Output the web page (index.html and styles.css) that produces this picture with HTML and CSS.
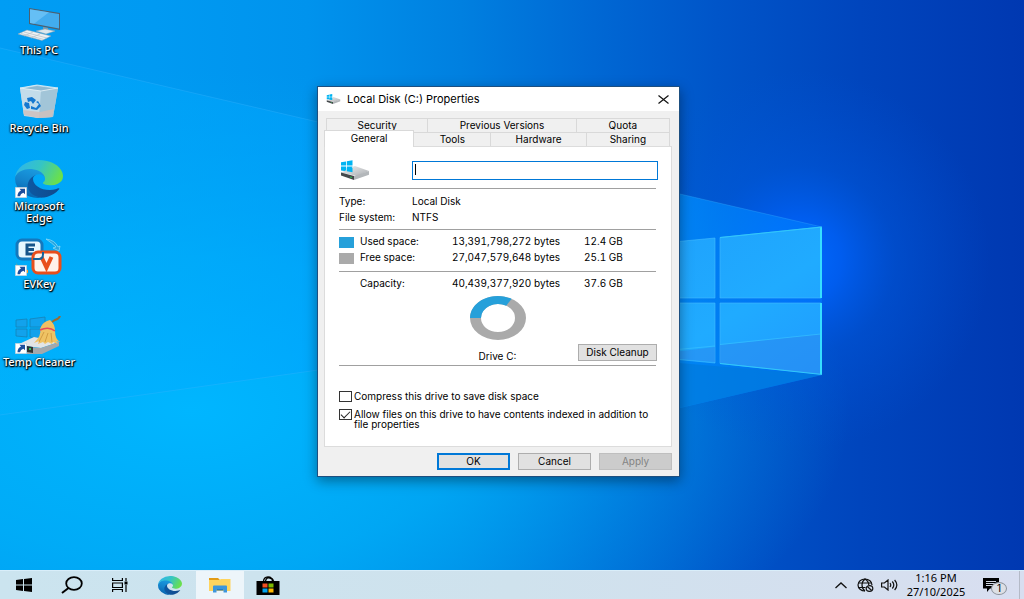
FILE: index.html
```html
<!DOCTYPE html>
<html lang="en">
<head>
<meta charset="utf-8">
<title>Local Disk (C:) Properties</title>
<link rel="stylesheet" href="styles.css">
</head>
<body>
<svg class="defs" aria-hidden="true">
  <defs>
    <linearGradient id="edge-dark" x1="0" x2="1" y1="0" y2="0"><stop offset="0" stop-color="#0c59a4"/><stop offset="1" stop-color="#114a8b"/></linearGradient>
    <linearGradient id="edge-mid" x1="0.6" x2="0.3" y1="0" y2="1"><stop offset="0" stop-color="#1b9de2"/><stop offset="0.5" stop-color="#1383cb"/><stop offset="1" stop-color="#0560ab"/></linearGradient>
    <linearGradient id="edge-top" x1="0" x2="1" y1="0.2" y2="0.5"><stop offset="0" stop-color="#2fb4ec"/><stop offset="0.5" stop-color="#35c5c4"/><stop offset="1" stop-color="#6be04a"/></linearGradient>
    <linearGradient id="disk-top" x1="0" x2="1" y1="0" y2="1"><stop offset="0" stop-color="#f1f1f1"/><stop offset="1" stop-color="#a9adb1"/></linearGradient>
  </defs>
  <symbol id="edge" viewBox="0 0 256 256" preserveAspectRatio="none">
    <path fill="url(#edge-dark)" d="M231 190.500a93.700 93.700 0 0 1-10.500 4.700 101.900 101.900 0 0 1-35.900 6.500c-47.300 0-88.500-32.600-88.500-74.300A31.500 31.500 0 0 1 112.500 100c-42.800 1.800-53.800 46.400-53.800 72.500 0 73.900 68.100 81.400 82.800 81.400 7.900 0 19.800-2.300 27-4.600l1.300-.4a128.300 128.300 0 0 0 66.500-52.800 4 4 0 0 0-5.300-5.600z"/>
    <path fill="url(#edge-mid)" d="M105.700 241.400a79.200 79.200 0 0 1-22.700-21.300 80.700 80.700 0 0 1 29.500-120c3.100-1.500 8.500-4.200 15.600-4a32.400 32.400 0 0 1 25.700 13 31.900 31.900 0 0 1 6.400 18.600c0-.2 24.500-79.600-80-79.600-43.900 0-80 41.700-80 78.200a130 130 0 0 0 12.100 56 128 128 0 0 0 156.400 67.100 75.500 75.500 0 0 1-63-8z"/>
    <path fill="url(#edge-top)" d="M152.300 148.900c-.8 1-3.300 2.500-3.300 5.600 0 2.600 1.700 5.100 4.700 7.200 14.400 10 41.500 8.700 41.600 8.700a59.600 59.600 0 0 0 30.300-8.300 61.400 61.400 0 0 0 30.400-52.900c.3-22.400-8-37.300-11.300-43.900C223.500 23.800 177.700 0 128 0A128 128 0 0 0 0 126.200c.5-36.500 36.800-66 80-66 3.500 0 23.500.3 42 10 16.300 8.600 24.900 19 30.900 29.200 6.200 10.700 7.300 24.200 7.300 29.500s-2.800 13.400-7.900 20z"/>
  </symbol>
  <symbol id="shortcut" viewBox="0 0 12 11">
    <path fill="#fff" stroke="#b9c3cc" stroke-width=".6" d="M.3.300h11.400v10.400H.3z"/>
    <path fill="#1d4f9c" d="M4.500 1.800H10v5.400L8.400 5.700Q5.500 6.500 5 9.300H2.500Q2.400 5.200 6 3.500z"/>
  </symbol>
  <symbol id="disk" viewBox="0 0 28 20">
    <path fill="#00b4f2" d="M0 2.300 5 1.400v4.200H0zM5.800 1.200 11.500.2v5.400H5.800zM0 6.400h5v4.800L0 10.500zM5.800 6.400h5.700v5.800l-5.700-.9z"/>
    <path fill="url(#disk-top)" d="M0 12.500 11.500 7.500V6.700L14 6l14 5-12 5z"/>
    <path fill="#45494c" d="M0 12.500 13 16v4L0 15.500z"/>
    <path fill="#b3b7ba" d="M13 16 28 11v3.700L13 20z"/>
    <path fill="#00b4f2" d="M5.800 8h5.700v4.200l-5.700-.9z"/>
    <path fill="#28c24d" d="m9 16.500 2 .6v1l-2-.6z"/>
  </symbol>
</svg>

<main class="desktop">
  <svg class="wallpaper" viewBox="0 0 1024 570" preserveAspectRatio="none" aria-hidden="true">
    <defs>
      <linearGradient id="sky" x1="0" x2="1024" y1="0" y2="0" gradientUnits="userSpaceOnUse">
        <stop offset="0" stop-color="#009df4"/><stop offset=".15" stop-color="#009af2"/><stop offset=".3" stop-color="#0093ed"/><stop offset=".45" stop-color="#0080e0"/><stop offset=".58" stop-color="#0068d4"/><stop offset=".7" stop-color="#0055c9"/><stop offset=".84" stop-color="#0045bd"/><stop offset="1" stop-color="#0038b1"/>
      </linearGradient>
      <radialGradient id="lowglow" cx="0" cy="0" r="1" gradientUnits="userSpaceOnUse" gradientTransform="translate(190 410) scale(660 340)"><stop offset="0" stop-color="#00b6ff"/><stop offset=".45" stop-color="#00b0f8" stop-opacity=".75"/><stop offset="1" stop-color="#00a4f0" stop-opacity="0"/></radialGradient>
      <radialGradient id="halo" cx="0" cy="0" r="1" gradientUnits="userSpaceOnUse" gradientTransform="translate(800 260) scale(190 190)"><stop offset="0" stop-color="#006aff"/><stop offset=".22" stop-color="#0062fa" stop-opacity=".8"/><stop offset=".5" stop-color="#005ae2" stop-opacity=".4"/><stop offset="1" stop-color="#0054d8" stop-opacity="0"/></radialGradient>
      <linearGradient id="beam" x1="0" x2="822" y1="0" y2="0" gradientUnits="userSpaceOnUse"><stop offset="0" stop-color="#00b4ff" stop-opacity=".3"/><stop offset=".8" stop-color="#0092ff" stop-opacity=".75"/><stop offset="1" stop-color="#007cff" stop-opacity=".6"/></linearGradient>
      <linearGradient id="pane" x1="0" x2="1" y1="0" y2="1"><stop offset="0" stop-color="#1f9ffb"/><stop offset=".6" stop-color="#20abff"/><stop offset="1" stop-color="#1f9bff"/></linearGradient>
    </defs>
    <path fill="url(#sky)" d="M0 0h1024v570H0z"/>
    <path fill="url(#lowglow)" d="M0 0h1024v570H0z"/>
    <path fill="url(#halo)" d="M0 0h1024v570H0z"/>
    <path fill="url(#beam)" d="M0 48 318 122 680 194 822 227v148L680 408 318 370 0 415z"/>
    <path fill="#007bdd" opacity=".7" d="M679 363 822 375 679 408z"/>
    <path fill="none" stroke="#40b5ff" stroke-opacity=".3" d="M0 48 318 122 680 194 822 227M0 415 318 370"/>
    <path fill="url(#pane)" stroke="#43bdff" stroke-opacity=".6" d="M600 249 715 238v60H600zM720 237.500 821 227v71H720zM600 303h115v60l-115-11zM720 303h101v71L720 363.500z"/>
    <path fill="#2b86ed" opacity=".5" d="M600 361 715 347v15l-115-10zM720 345 821 334v40L720 363z"/>
    <path fill="none" stroke="#37c0ff" stroke-opacity=".7" d="M640 353 715 346M720 344.500 821 334"/>
    <path fill="none" stroke="#35deff" stroke-width="2" d="M821 227v71M821 303v71"/>
    <path fill="none" stroke="#31c8fa" d="M720 237.500 822 227M720 363.500 822 374.500"/>
  </svg>

  <nav class="shortcuts" aria-label="Desktop">
    <a class="shortcut" href="#this-pc">
      <svg class="shortcut-icon" viewBox="0 0 48 38" aria-hidden="true">
        <path fill="#4c6070" d="m14 4 31 5v17l-31-6z"/><path fill="#42acee" d="m15 5.200 29 4.700v14.700l-29-5.500z"/><path fill="#7dccfa" opacity=".6" d="m15 5.200 19 3-15 11.600-4-.7z"/>
        <path fill="#879daa" d="m28 23 5 1v3h-5z"/><path fill="#dfe8ed" stroke="#8ba0ae" stroke-width=".5" d="m21 27 9-2 10 2-9 3z"/>
        <path fill="#eef1f3" stroke="#8ba0ae" stroke-width=".5" d="m3 30 9-4 24 6-9 4.500z"/><path stroke="#b5c0c7" stroke-width=".7" fill="none" d="m6 29.500 23 6M9 28l23 6M9 32l9-4M16 34l9-4"/>
      </svg>
      <span class="shortcut-label">This PC</span>
    </a>
    <a class="shortcut" href="#recycle-bin">
      <svg class="shortcut-icon" viewBox="0 0 48 38" aria-hidden="true">
        <path fill="#b8d7e8" d="m5 6 16-3 22 3-5 29-15 1-14-2z"/><path fill="#8db9d2" d="m8 6.500 14-2.500 18 2.500L26 9z"/><path fill="#c3dcea" d="m5 6 21 3-2 27-15-3z"/><path fill="#a2c5d8" d="m26 9 17-3-5 29-14 1z"/><path fill="#cfc0bd" d="m8 28 17 2 14-3-2 8-14 1-14-3z" opacity=".85"/>
        <path fill="none" stroke="#e8f3f8" stroke-width=".8" d="m5 6 21 3 17-3-21-3z"/>
        <path fill="#1478d0" d="m12 16 5-1 4 3-3 4-2-3-3 1zM10 20l4 1 1 5-3 1-3-4zM16 24l5 2 3-4-3-2 2-1 3 5-4 4-6-1z"/>
      </svg>
      <span class="shortcut-label">Recycle Bin</span>
    </a>
    <a class="shortcut" href="#edge-browser">
      <svg class="shortcut-icon" viewBox="0 0 48 38" aria-hidden="true"><use href="#edge" width="48" height="38"/><use href="#shortcut" y="27" width="12" height="11"/></svg>
      <span class="shortcut-label">Microsoft Edge</span>
    </a>
    <a class="shortcut" href="#evkey">
      <svg class="shortcut-icon" viewBox="0 0 48 38" aria-hidden="true">
        <path fill="#2ba7de" stroke="#a8e5fa" stroke-width=".6" d="M31 1q9 1 12 8l2-1-1 5-6-3 3-1Q37 5 31 1z"/><path fill="#ff9c24" d="M1 24q1 5 7 7l5 1v3Q2 34 1 24z"/>
        <rect x="2" y="2" width="25" height="19" rx="5" fill="#e6f7ff" stroke="#1478bd" stroke-width="3"/>
        <path fill="none" stroke="#165489" stroke-width="3" d="M20 7h-8v9h8M12 11.500h7"/>
        <rect x="18" y="14" width="27" height="21" rx="5" fill="#fff2e9" stroke="#e84e1b" stroke-width="3"/>
        <path fill="none" stroke="#e84e1b" stroke-width="4" d="m26.500 19 5 10.500 5-10.500"/><path fill="none" stroke="#14639b" stroke-width="2" d="M18 21h6q4 0 4-5v-2"/>
        <use href="#shortcut" y="27" width="12" height="11"/>
      </svg>
      <span class="shortcut-label">EVKey</span>
    </a>
    <a class="shortcut" href="#temp-cleaner">
      <svg class="shortcut-icon" viewBox="0 0 48 38" aria-hidden="true">
        <path fill="#12a2ec" stroke="#1583b8" stroke-width=".8" d="m1 4 11-1v8H1zM15 3l15-2v10H15zM1 13h11v8L1 20zM15 13h15v10l-15-2z"/>
        <path fill="#e1e4e6" d="m2 29 17-8 25 5-18 6z"/><path fill="#a3a8ac" d="m26 32 18-6v4l-17 8H12v-7z"/><path fill="#303536" d="m12 30 6 1v6l-6-1z"/><path fill="#35c45a" d="M14 32h2v2h-2z"/>
        <path fill="#efc364" d="M25 13q9-4 15 2 0 8 5 11l-4-1 2 3-5-2-1 2-4-2-3 2-2-2-5 2 1-3-5 2q8-8 6-14z"/><path fill="none" stroke="#bd812b" stroke-width=".6" d="m29 16-5 10M33 17l-3 9M36 17l1 9"/>
        <path fill="#f1c063" d="M25 13q2-6 7-8l3-1q5 4 5 11-7-4-15-2z"/><path fill="none" stroke="#e64a5a" stroke-width="1.500" d="M25 14q9-4 15 1"/><path fill="none" stroke="#9a6b31" stroke-width="2" d="m37 6 3-2q4-1 5-4"/>
        <use href="#shortcut" y="27" width="12" height="11"/>
      </svg>
      <span class="shortcut-label">Temp Cleaner</span>
    </a>
  </nav>

  <section class="dialog" role="dialog" aria-labelledby="dialog-title">
    <header class="titlebar">
      <svg class="titlebar-icon" viewBox="0 0 28 20" aria-hidden="true"><use href="#disk"/></svg>
      <h1 class="title" id="dialog-title">Local Disk (C:) Properties</h1>
      <button class="close" type="button" aria-label="Close"><svg class="close-icon" viewBox="0 0 11 9" aria-hidden="true"><path fill="none" stroke="#111" stroke-width="1.200" d="m.5.500 10 8m0-8-10 8"/></svg></button>
    </header>
    <form class="dialog-body">
      <div class="tabs" role="tablist">
        <div class="tab-row tab-row-back">
          <button class="tab" type="button" role="tab">Security</button>
          <button class="tab" type="button" role="tab">Previous Versions</button>
          <button class="tab" type="button" role="tab">Quota</button>
        </div>
        <div class="tab-row tab-row-front">
          <button class="tab tab-active" type="button" role="tab" aria-selected="true">General</button>
          <button class="tab" type="button" role="tab">Tools</button>
          <button class="tab" type="button" role="tab">Hardware</button>
          <button class="tab" type="button" role="tab">Sharing</button>
        </div>
      </div>
      <div class="panel" role="tabpanel">
        <div class="volume">
          <svg class="volume-icon" viewBox="0 0 28 20" aria-hidden="true"><use href="#disk"/></svg>
          <div class="volume-field">
            <input class="volume-name" type="text" aria-label="Volume label">
            <span class="caret"></span>
          </div>
        </div>
        <dl class="facts">
          <dt>Type:</dt><dd>Local Disk</dd>
          <dt>File system:</dt><dd>NTFS</dd>
        </dl>
        <table class="space">
          <tbody>
            <tr><th scope="row"><span class="swatch swatch-used"></span>Used space:</th><td class="bytes">13,391,798,272 bytes</td><td class="size">12.4 GB</td></tr>
            <tr><th scope="row"><span class="swatch swatch-free"></span>Free space:</th><td class="bytes">27,047,579,648 bytes</td><td class="size">25.1 GB</td></tr>
          </tbody>
        </table>
        <table class="space space-total">
          <tbody><tr><th scope="row"><span class="swatch"></span>Capacity:</th><td class="bytes">40,439,377,920 bytes</td><td class="size">37.6 GB</td></tr></tbody>
        </table>
        <div class="drive">
          <figure class="chart">
            <svg class="donut" viewBox="0 0 56 44" role="img" aria-label="Used and free space">
              <path fill="#aaa" fill-rule="evenodd" d="M0 22a28 22 0 1 0 56 0 28 22 0 1 0-56 0zm11 0a17 14 0 1 0 34 0 17 14 0 1 0-34 0z"/>
              <path fill="#26a0da" d="M0 22A28 22 0 0 1 41.600 2.800L36.200 9.800A17 14 0 0 0 11 22z"/>
            </svg>
            <figcaption>Drive C:</figcaption>
          </figure>
          <button class="button cleanup" type="button">Disk Cleanup</button>
        </div>
        <div class="options">
          <label class="option"><input class="check" type="checkbox"><span>Compress this drive to save disk space</span></label>
          <label class="option"><input class="check" type="checkbox" checked><span>Allow files on this drive to have contents indexed in addition to file properties</span></label>
        </div>
      </div>
      <div class="actions">
        <button class="button button-default" type="submit">OK</button>
        <button class="button" type="button">Cancel</button>
        <button class="button" type="button" disabled>Apply</button>
      </div>
    </form>
  </section>
</main>

<footer class="taskbar">
  <button class="task" type="button" aria-label="Start"><svg width="16" height="14" viewBox="0 0 16 14" aria-hidden="true"><path d="m0 2 7-1v5.500H0zM8 .9 16 0v6.500H8zM0 7.500h7V13l-7-1zM8 7.500h8V14l-8-.9z"/></svg></button>
  <button class="task" type="button" aria-label="Search"><svg width="22" height="18" viewBox="0 0 22 18" aria-hidden="true"><ellipse cx="13" cy="7.500" rx="7.800" ry="6.300" fill="none" stroke="#000" stroke-width="1.800"/><path stroke="#000" stroke-width="2" d="m7.500 12-6.500 5"/></svg></button>
  <button class="task" type="button" aria-label="Task View"><svg width="16" height="14" viewBox="0 0 16 14" aria-hidden="true"><path fill="none" stroke="#000" stroke-width="1.200" d="M.6 0v2.500h9.800V0M.6 5h9.800v4.500H.6zM.6 14v-2.500h9.800V14M14 0v3M14 7v7"/><path d="M12.500 3.500h3v3h-3z"/></svg></button>
  <button class="task task-edge" type="button" aria-label="Microsoft Edge"><svg width="24" height="19" viewBox="0 0 24 19" aria-hidden="true"><use href="#edge" width="24" height="19"/></svg></button>
  <button class="task task-open" type="button" aria-label="File Explorer"><svg width="22" height="16" viewBox="0 0 22 16" aria-hidden="true"><path fill="#e39b16" d="M0 1h9l2 2h10v3H0z"/><path fill="#ffd45e" d="M0 3h10l2-1h9.500v12H0z"/><path fill="#3d96dc" d="M4 15.500V9.500q0-1 1-1h12q1 0 1 1v6h-3.500V12h-7v3.500z"/><path fill="#247cc4" d="M7.500 12h7v1.500h-7z"/></svg></button>
  <button class="task" type="button" aria-label="Microsoft Store"><svg width="24" height="19" viewBox="0 0 24 19" aria-hidden="true"><path d="M.5 5h23v14H.5z"/><path fill="none" stroke="#000" stroke-width="1.300" d="M7.500 6Q7.500.800 12 .800t4.500 5.200M9.500 5q1-4 4-3 3 0 4 3"/><path fill="#f25022" d="M6.500 7.500h5v4h-5z"/><path fill="#7fba00" d="M12.500 7.500h5v4h-5z"/><path fill="#00a4ef" d="M6.500 12.500h5v4h-5z"/><path fill="#ffb900" d="M12.500 12.500h5v4h-5z"/></svg></button>
  <div class="tray">
    <button class="tray-item" type="button" aria-label="Show hidden icons"><svg width="12" height="7" viewBox="0 0 12 7" aria-hidden="true"><path fill="none" stroke="#111" stroke-width="1.300" d="m.5 6 5.500-5 5.500 5"/></svg></button>
    <button class="tray-item" type="button" aria-label="Network"><svg width="17" height="14" viewBox="0 0 17 14" aria-hidden="true"><g fill="none" stroke="#111" stroke-width="1.200"><path d="M8 13A7 6 0 1 1 15 7"/><path d="M8 13C4 10 4 4 8 1c3 2 4 4 3.700 6M1.500 5h13M1.500 9.500h7"/><ellipse cx="12.500" cy="10.500" rx="3.300" ry="2.800"/><path d="m10.300 8.500 4.400 4"/></g></svg></button>
    <button class="tray-item" type="button" aria-label="Volume"><svg width="17" height="12" viewBox="0 0 17 12" aria-hidden="true"><path fill="none" stroke="#111" stroke-width="1.200" d="M.6 4h2.800L7 1v10L3.400 8H.6zM9 4q1.500 2 0 4M11.300 2.500q3 3.500 0 7M13.600 1q4.500 5 0 10"/></svg></button>
    <time class="clock" datetime="2025-10-27T13:16"><span>1:16 PM</span><span>27/10/2025</span></time>
    <button class="notifications" type="button" aria-label="1 notification"><svg width="16" height="14" viewBox="0 0 16 14" aria-hidden="true"><path d="M0 0h16v10.500H7L4 14v-3.500H0z"/><path stroke="#cdd4df" d="M3 3.500h10M3 5.500h10M3 7.500h7"/></svg><span class="badge">1</span></button>
    <button class="show-desktop" type="button" aria-label="Show desktop"></button>
  </div>
</footer>
</body>
</html>
```
FILE: styles.css
```css
* { box-sizing: border-box; }

body {
  margin: 0;
  min-height: 100vh;
  display: flex;
  flex-direction: column;
  overflow: hidden;
  font: 10px/16px Inter, "Liberation Sans", sans-serif;
  color: #000;
}

button, input { font: inherit; color: inherit; margin: 0; padding: 0; }
button { border: 0; background: none; }
svg { display: block; }
.defs { position: absolute; width: 0; height: 0; }

/* Desktop */
.desktop { position: relative; flex: 1; background: #0079df; }
.wallpaper { position: absolute; inset: 0; width: 100%; height: 100%; }

.shortcuts {
  position: relative;
  display: grid;
  grid-auto-rows: 78px;
  width: 78px;
  padding-top: 4px;
}
.shortcut {
  display: flex;
  flex-direction: column;
  align-items: center;
  gap: 2px;
  color: #fff;
  text-decoration: none;
}
.shortcut-icon { width: 48px; height: 38px; flex: none; }
.shortcut-label {
  font: 500 11px/12px "Noto Sans", "Open Sans", sans-serif;
  text-align: center;
  text-shadow: 1px 1px 1px #000, 0 1px 2px #000, 0 0 2px #000;
}

/* Properties window */
.dialog {
  position: absolute;
  left: 317px;
  top: 86px;
  width: 363px;
  border: 1px solid #1d4f80;
  background: #f0f0f0;
  box-shadow: 0 4px 12px #0006;
}
.titlebar {
  display: flex;
  align-items: center;
  height: 24px;
  padding: 0 10px 0 8px;
  background: #fff;
}
.titlebar-icon { width: 15px; height: 10px; }
.title {
  flex: 1;
  margin: 0 0 0 6px;
  font: inherit;
  font-size: 11px;
}
.close { display: grid; place-items: center; }
.close-icon { width: 11px; height: 9px; }

.dialog-body { padding: 7px 7px 6px 6px; }
.tabs { padding: 0 2px; }
.tab-row { display: grid; }
.tab-row-back { grid-template-columns: 102fr 148fr 93fr; }
.tab-row-front { grid-template-columns: 88fr 77fr 95fr 83fr; }
.tab {
  height: 14px;
  border: 1px solid #d9d9d9;
  border-width: 1px 1px 0 0;
  line-height: 13px;
}
.tab:first-child { border-left-width: 1px; }
.tab-active {
  position: relative;
  height: 17px;
  margin: -2px 0 -1px -2px;
  padding-bottom: 2px;
  background: #fff;
}

.panel {
  padding: 13px 15px 17px 14px;
  border: 1px solid #dcdcdc;
  background: #fff;
}
.volume {
  display: grid;
  grid-template-columns: 73px 1fr;
  align-items: center;
  padding-bottom: 8px;
}
.volume-icon { width: 28px; height: 20px; margin-left: 2px; }
.volume-field { position: relative; margin-right: -2px; }
.volume-name {
  display: block;
  width: 100%;
  height: 19px;
  padding: 0 3px;
  border: 1px solid #0078d7;
  border-radius: 0;
  background: #fff;
  outline: 0;
}
.caret { position: absolute; left: 3px; top: 3px; width: 1px; height: 11px; background: #000; }

.facts {
  display: grid;
  grid-template-columns: 73px 1fr;
  margin: 0;
  padding: 4px 0;
  border: 1px solid #a0a0a0;
  border-width: 1px 0;
}
.facts dd { margin: 0; }
.space {
  width: 100%;
  margin: 3px 0 6px;
  border-collapse: collapse;
  table-layout: fixed;
  font-variant-numeric: tabular-nums;
}
.space-total { margin: 0; border-top: 1px solid #a0a0a0; }
.space th, .space td { padding: 0; font-weight: 400; text-align: left; }
.space-total th, .space-total td { padding-top: 3px; }
.space th { width: 105px; }
.space .bytes { width: 116px; text-align: right; }
.space .size { padding-left: 24px; }
.swatch { display: inline-block; width: 15px; height: 11px; margin-right: 6px; vertical-align: middle; }
.swatch-used { background: #26a0da; }
.swatch-free { background: #aaa; }

.drive {
  display: grid;
  grid-template-columns: 1fr 160px;
  align-items: end;
  padding: 5px 0 1px;
  border-bottom: 1px solid #a0a0a0;
}
.chart {
  grid-area: 1 / 1 / 2 / 3;
  display: flex;
  flex-direction: column;
  align-items: center;
  gap: 8px;
  margin: 0;
}
.donut { width: 56px; height: 44px; }
.cleanup { grid-area: 1 / 2 / 2 / 3; justify-self: end; width: 79px; margin: 0 -1px 3px 0; }

.button {
  height: 17px;
  border: 1px solid #adadad;
  background: #e1e1e1;
  line-height: 15px;
}
.button-default { border: 2px solid #0078d7; line-height: 13px; }
.button:disabled { border-color: #bfbfbf; background: #ccc; color: #838383; }

.options { display: grid; gap: 7px; padding-top: 25px; }
.option { display: flex; gap: 2px; line-height: 10px; }
.check {
  appearance: none;
  flex: none;
  display: grid;
  place-items: center;
  width: 13px;
  height: 11px;
  border: 1px solid #333;
  background: #fff;
}
.check:checked::before {
  content: "";
  width: 8px;
  height: 4px;
  margin-bottom: 3px;
  border: solid #222;
  border-width: 0 0 1px 1px;
  transform: rotate(-45deg);
}

.actions {
  display: grid;
  grid-template-columns: repeat(3, 73px);
  justify-content: end;
  gap: 8px;
  padding-top: 6px;
}

/* Taskbar */
.taskbar {
  display: flex;
  height: 29px;
  border-top: 1px solid #d9eefa;
  background: linear-gradient(90deg, #cbe4ef, #cfe2ed 50%, #d8def0);
}
.task { display: grid; place-items: center; width: 48px; }
.task-edge { width: 52px; }
.task-open { background: #edf5fa; }
.tray { display: flex; align-items: center; margin-left: auto; }
.tray-item { display: grid; place-items: center; width: 24px; height: 28px; }
.clock {
  display: flex;
  flex-direction: column;
  width: 70px;
  font: 11px/14px "Noto Sans", "Open Sans", sans-serif;
  text-align: center;
}
.notifications { position: relative; width: 48px; padding-left: 12px; }
.badge {
  position: absolute;
  left: 20px;
  top: 4px;
  width: 16px;
  height: 13px;
  border: 1px solid #8b929b;
  border-radius: 50%;
  background: #dde0e5;
  line-height: 11px;
}
.show-desktop { width: 5px; height: 28px; border-left: 1px solid #b4bac7; }
```
